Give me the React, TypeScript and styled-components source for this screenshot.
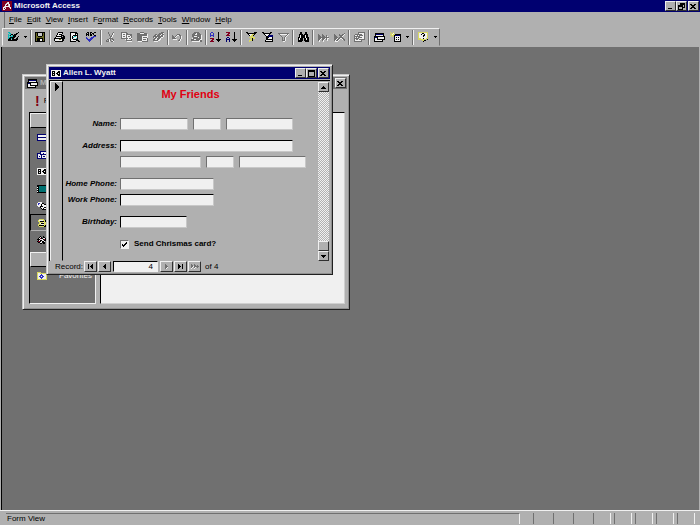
import React from "react";
import styled, { createGlobalStyle } from "styled-components";

const face = "#b0b0b0";
const light = "#f0f0f0";
const shade = "#707070";
const navy = "#000070";
const sans = '"Liberation Sans", Arial, sans-serif';

const GlobalStyle = createGlobalStyle`
  * { box-sizing: border-box; }
  body { margin: 0; background: ${shade}; font: 8px/10px ${sans}; color: #000; }
  button, input { font: inherit; color: inherit; margin: 0; padding: 0; border-radius: 0; }
`;

/* ---------- pixel icons ---------- */

const palette: Record<string, string> = {
  k: "#000000", w: light, g: shade, n: navy, y: "#d8d860", c: "#10b8b8",
  t: "#007070", r: "#800020", l: "#c8c8c8", o: "#686820", b: "#3030c0",
};

const icons: Record<string, string[]> = {
  app: ["rrrrrrrrrr", "rrrrrlwrrr", "rrrrlwwrrr", "rrrlwrlwrr", "rrrwrrlwrr", "rrlwwwwwrr", "rwwlrrrlwr", "rwrwrrrrwr", "rwwrrrrrrr", "rrrrrrrrrr"],
  view: ["cc........k", ".cc.....kk.", "c.ckk.kkk..", "cck.ckkk...", "c.ccckkk..k", "cckkkkk..k.", "ckkckk..kk.", "kkk.kkkkkk.", "kkkkkkkkk..", "..........."],
  save: ["kkkkkkkkkk", "kokllllkok", "kokllllkok", "kokllllkok", "kookkkkook", "kooooooook", "kokkkkkkok", "kokkkwwkok", "kokkkwwkok", "kkkkkkkkkk"],
  print: ["....kkkkk..", "...kwwwwk..", "...kwkkk...", "..kwwwwkkk.", "..kkkkkk.kk", ".kwwwwwkkkk", "kkkkkkkkkkk", "kwwwwoowkk.", "kwwwwwwwkk.", ".kkkkkkkk.."],
  preview: ["kkkkkkk...", "kwwwwkkk..", "kwwwwkwk..", "kwwkkkkk..", "kwkwccwk..", "kwkcwwwk..", "kwkwwwck..", "kwwkkkkk..", "kwwwwwkkk.", "kkkkkk..kk"],
  spell: [".kk.kk..kk", "k.k.k.kk..", "kkk.kk.k..", "k.k.kk..kk", ".......bbb", "b....bbb..", "bb..bbb...", ".bbbbb....", "..bbb.....", "...b......"],
  cut: ["..g....g.", "..g...gw.", "...g..gw.", "...g.gw..", "....ggw..", "....gw...", "...gggg..", ".ggwg.gg.", "g.gwg.wg.", "gggw.ggw."],
  copy: ["gggggg.....", "gwwwwgg....", "gwggwgggggg", "gwwwwgwwwgg", "gwggwgwggwg", "gwwwwgwwwwg", "gggggggwggw", "....wgwwwwg", ".....gggggg", "......wwwww"],
  paste: ["...gggg....", "gggwwwwggg.", "ggggggggggw", "ggggggggggw", "gggggwwwwww", "gggggwggggw", "gggggwwwwwg", "gggggwgggwg", "gggggwwwwwg", ".wwwwgggggg"],
  painter: ["........ggg", "......ggggw", "..gg.gggwgg", ".ggwgggwggw", "ggggggggggw", "gwggwgggww.", ".ggwgggw...", "ggwwggww...", "gggggww....", ".wwww......"],
  undo: ["..........", "..........", ".....ggg..", "g...gwwgg.", "gg.gw...gw", "gggw....gw", "gggg....gw", ".wwww..gw.", "......ggw.", ".......w.."],
  link: ["...ggggg...", "..gggwggg..", ".gggwwgggg.", ".gggggggggw", ".ggwwwggggw", "..gggggwggw", ".wggggggggw", "gggwwggggww", "ggggggggwgg", ".wwwwwwwwgg"],
  sortUp: [".bb.....k.", "b..b....k.", "b..b....k.", "bbbb....k.", "b..b....k.", "........k.", "rrrr....k.", "..rr..kkkkk", ".rr....kkk.", "rrrr....k.."],
  sortDown: ["rrrr....k.", "..rr....k.", ".rr.....k.", "rrrr....k.", "........k.", ".nn.....k.", "n..n....k.", "nnnn..kkkkk", "n..n...kkk.", "n..n....k.."],
  filterSel: ["kk......kkk", ".kkkkkkkkk.", "..kwwwyyk..", "...kwyyk...", "....yyy....", "...yyyyyy..", ".....ykyy..", "....yyk....", "...yyyk....", "...y......."],
  filterForm: ["kk......kk.", ".kkkkkkkk..", "..kwwwwk...", "...kwwknnnn", "....kknnnnn", "....kkkwwwk", "....kkwwwwk", "....kkkkkkk", "...kwwwwwwk", "...kkkkkkkk"],
  filter: ["ggggggggggg", ".gwwwwwwwgw", "..g.....gw.", "...g...gw..", "....g.gw...", "....g.gw...", "....g.gw...", "....gggw...", ".....ww...."],
  find: ["..kk...kk..", "..kk...kk..", ".kkkk.kkkk.", ".kwkkkkwkk.", ".kwkkkkwkk.", "kkwkkkkwkkk", "kwkkk.kkwkk", "kwkkk.kkwkk", "kkkkk.kkkkk", "kkkk...kkkk"],
  newRec: ["...........", "g...g......", "gg..gg..g..", "ggg.ggg.gw.", "ggggggggggg", "gggwgggwgww", "ggw.ggw.gw.", "gw..gw...w.", ".w...w....."],
  delRec: ["..........g", "g....g..ggw", "gg...ggggw.", "ggg...ggw..", "gggg.gggg..", "gggwggwwgg.", "ggwggw..wgg", "gwggw.....g", ".www......."],
  props: ["....ggggggg", "....gwwwwwg", ".gggggggwwg", "gwwgwggggwg", "ggggggwwwwg", "gwgwggggwwg", "gggggwwwwwg", "gwggwgggggg", "gwwwwwwg...", "gggggggg..."],
  database: [".kkkkkkkkk.", ".knnnnnnnk.", ".kwwwwwwwk.", "kkkkkkkkkkk", "knnkwwwwwwk", "kwwkwwwwwwk", "kwwkkkkkkkk", "kwwwwwwwk..", "kkkkkkkkk.."],
  newObject: ["y..y.......", ".yyw.......", "yywyykkkkkk", ".yyyknnnnnk", "y.y.kwwwwwk", "....kwkwkwk", "....kwwwwwk", "....kwkwkwk", "....kwwwwwk", "....kkkkkkk"],
  help: ["yyyyyyyyyy", "ywwwkkwwwy", "ywwkwwkwwy", "ywwwwkkwwy", "ywwwwkwwwy", "ywwwwwwwwy", "yyywwkwwyy", "yyyyyyyy.k", "....yykk..", ".....k...."],
  form: ["wwwwwwwwww", "wkkkwwwkkw", "wkwkwwkkkw", "wkkkwkkwkw", "wkwkwwkkkw", "wkkkwwwkkw", "wwwwwwwwww"],
  table: ["nnnnnnnnnn", "nwwwwwwwwn", "nwwwwwwwwn", "nnnnnnnnnn", "nwwwwwwwwn", "nwwwwwwwwn", "nnnnnnnnnn"],
  query: ["...nnnnnnn", "...nwwwwwn", "nnnnwwnwwn", "nwwnnnnnnn", "nwwwnwwwwn", "nwnwnwnnwn", "nwwwnwwwwn", "nnnnnnnnnn"],
  report: ["kkkkkkkkkk", "kktttttttt", "wktttttttt", "kktttttttt", "wktttttttt", "kktttttttt", "wktttttttt", "kkkkkkkkkk"],
  page: [".wwww.....", "wbbwwkk...", "wbwwkwwkkk", "wwwwkwwwwk", ".wwkkkwwwk", "...kwwwkkk", "....kwkwwk", ".....kkkkk"],
  macro: ["..yyyyy...", ".ywwwwyyk.", ".yykkkkyk.", "..yyyywyyk", "..ywkkkyyk", ".yyywwwyyk", ".ykkkkkyk.", "..yyyyykk."],
  module: ["...k..k...", "..kwk.kk..", ".kwrkkwwk.", "kkkwwwkrkk", ".kwkkwwkk.", "krrkwkkw..", ".kkwwkkk..", "...kk.kk.."],
  favorites: ["yyyy......", "ywwyyyyyyy", "ywwwbwwwwy", "ywwbbbwwwy", "ywbbwbbwwy", "ywwbbbwwwy", "ywwwbwwwwy", "yyyyyyyyyy"],
  min: [".......", ".......", ".......", ".......", ".......", ".kkkk..", "......."],
  max: ["kkkkkkk", "kkkkkkk", "k.....k", "k.....k", "k.....k", "k.....k", "kkkkkkk"],
  restore: ["..kkkkk", "..kkkkk", "kkkkk.k", "kkkkk.k", "k...kkk", "k...k..", "kkkkk.."],
  close: [".......", "kk..kk.", ".kkkk..", "..kk...", ".kkkk..", "kk..kk.", "......."],
  up: ["..k..", ".kkk.", "kkkkk"],
  down: ["kkkkk", ".kkk.", "..k.."],
  drop: ["kkk", ".k."],
  current: ["k....", "kk...", "kkk..", "kkkk.", "kkkk.", "kkk..", "kk...", "k...."],
  first: ["k...k", "k..kk", "k.kkk", "k..kk", "k...k"],
  prev: ["..k", ".kk", "kkk", ".kk", "..k"],
  next: ["g..", "gg.", "ggg", "ggw", "gw."],
  last: ["k...k", "kk..k", "kkk.k", "kk..k", "k...k"],
  add: ["g..g....", "gg.gg.g.", "ggwggggg", "gw.gw.g.", "w..w...."],
};

const Svg = styled.svg`
  display: block;
  flex: none;
  shape-rendering: crispEdges;
`;

function Icon({ name }: { name: string }) {
  const rows = icons[name];
  const width = Math.max(...rows.map((r) => r.length));
  return (
    <Svg width={width} height={rows.length} viewBox={`0 0 ${width} ${rows.length}`} aria-hidden="true">
      {rows.flatMap((row, y) =>
        [...row].map((c, x) =>
          c === "." ? null : <rect key={`${x}-${y}`} x={x} y={y} width="1" height="1" fill={palette[c]} />
        )
      )}
    </Svg>
  );
}

/* ---------- application frame ---------- */

const Frame = styled.div`
  display: flex;
  flex-direction: column;
  min-height: 100vh;
  overflow: hidden;
  background: ${face};
`;

const TitleBar = styled.header<{ $inactive?: boolean }>`
  display: flex;
  align-items: center;
  gap: 2px;
  height: 12px;
  padding: 0 1px 0 2px;
  background: ${(p) => (p.$inactive ? shade : navy)};
  color: ${(p) => (p.$inactive ? face : light)};
  font-weight: bold;
  white-space: nowrap;
`;

const Caption = styled.h1`
  flex: 1;
  margin: 0;
  font: inherit;
`;

const Controls = styled.div`
  display: flex;
  button:last-child { margin-left: 1px; }
`;

const Control = styled.button`
  display: flex;
  align-items: center;
  justify-content: center;
  width: 11px;
  height: 10px;
  background: ${face};
  border: 1px solid;
  border-color: ${light} #303030 #303030 ${light};
`;

function WindowControls({ middle }: { middle: string }) {
  return (
    <Controls>
      <Control aria-label="Minimize"><Icon name="min" /></Control>
      <Control aria-label={middle === "max" ? "Maximize" : "Restore"}><Icon name={middle} /></Control>
      <Control aria-label="Close"><Icon name="close" /></Control>
    </Controls>
  );
}

const MenuBar = styled.nav`
  display: flex;
  align-items: center;
  gap: 5px;
  height: 16px;
  margin-left: 4px;
  padding-left: 4px;
  border-left: 1px solid ${shade};
`;

const MenuItem = styled.button`
  border: 0;
  background: none;
  line-height: 12px;
`;

const Toolbar = styled.div`
  display: flex;
  align-items: center;
  width: max-content;
  height: 18px;
  margin-left: 2px;
  padding-left: 2px;
  border: 1px solid;
  border-color: ${light} ${shade} ${face} ${light};
`;

const ToolButton = styled.button<{ $narrow?: boolean }>`
  display: flex;
  align-items: center;
  justify-content: center;
  width: ${(p) => (p.$narrow ? 8 : 16)}px;
  height: 16px;
  border: 0;
  background: none;
`;

const Separator = styled.span<{ $wide?: boolean }>`
  width: 2px;
  height: 15px;
  margin: 0 ${(p) => (p.$wide ? 1 : 0)}px 0 1px;
  background: linear-gradient(90deg, ${shade} 50%, ${light} 50%);
`;

const Workspace = styled.main`
  position: relative;
  flex: 1;
  margin: 1px 1px 0;
  background: ${shade};
  border-left: 1px solid #000;
`;

const StatusBar = styled.footer`
  display: flex;
  height: 15px;
  padding: 2px 5px 1px 6px;
  border-top: 1px solid ${light};
`;

const StatusText = styled.div`
  flex: 1;
  padding: 0 1px;
  border-top: 1px solid ${shade};
  border-right: 1px solid ${light};
`;

const StatusCells = styled.div`
  display: flex;
  gap: 3px;
  padding-left: 13px;
`;

const StatusCell = styled.span<{ $raised?: boolean }>`
  width: ${(p) => (p.$raised ? 18 : 17)}px;
  border-left: 1px solid ${shade};
  border-right: 1px solid ${(p) => (p.$raised ? light : face)};
`;

/* ---------- child windows ---------- */

const ChildWindow = styled.section<{ $x: number; $y: number; $w: number; $h?: number }>`
  position: absolute;
  left: ${(p) => p.$x}px;
  top: ${(p) => p.$y}px;
  width: ${(p) => p.$w}px;
  min-height: ${(p) => p.$h ?? 0}px;
  display: flex;
  flex-direction: column;
  padding: 2px;
  background: ${face};
  border: 1px solid;
  border-color: #c8c8c8 #202020 #202020 #c8c8c8;
  box-shadow: inset 1px 1px ${light}, inset -1px -1px #909090;
`;

const DatabaseTools = styled.div`
  display: flex;
  align-items: center;
  height: 23px;
  padding: 0 10px;
`;

const Run = styled.button`
  display: flex;
  align-items: center;
  gap: 4px;
  border: 0;
  background: none;
`;

const RunMark = styled.span`
  color: #800010;
  font: bold 14px/16px ${sans};
`;

const Split = styled.div`
  display: flex;
  flex: 1;
  gap: 4px;
  padding: 0 2px 3px 4px;
`;

const Sidebar = styled.aside`
  width: 67px;
  background: ${shade};
  border: 1px solid;
  border-color: #000 ${light} ${light} #000;
`;

const GroupHeader = styled.button`
  display: block;
  width: 100%;
  height: 15px;
  background: ${face};
  border: 1px solid;
  border-color: ${light} #000 #000 ${light};
`;

const ObjectItem = styled.button<{ $active?: boolean }>`
  display: flex;
  align-items: center;
  gap: 12px;
  width: 100%;
  height: 17px;
  padding-left: 6px;
  background: none;
  color: ${light};
  border: 1px solid;
  border-color: ${(p) => (p.$active ? `#000 ${face} ${face} #000` : "transparent")};
`;

const ObjectGroup = styled.div`
  padding: 1px 0 4px;
`;

const ObjectList = styled.div`
  flex: 1;
  background: ${light};
  border: 1px solid;
  border-color: #000 #d0d0d0 #d0d0d0 #000;
`;

const FormBody = styled.div`
  display: flex;
  margin-top: 1px;
  border-top: 1px solid #000;
  border-left: 1px solid #000;
`;

const RecordSelector = styled.div`
  width: 13px;
  padding: 1px 4px;
  border: 1px solid;
  border-color: ${light} #000 ${face} ${light};
`;

const FormContent = styled.form`
  flex: 1;
  display: flex;
  flex-direction: column;
  gap: 10px;
  padding: 6px 0 11px;
`;

const FormTitle = styled.h2`
  margin: 0 0 7px;
  font: bold 11px/14px ${sans};
  color: #e00010;
  text-align: center;
`;

const FieldGroup = styled.div`
  display: flex;
  flex-direction: column;
  gap: 4px;
`;

const FieldRow = styled.div`
  display: grid;
  grid-template-columns: 54px 1fr;
  gap: 3px;
  height: 12px;
`;

const Label = styled.label`
  align-self: center;
  justify-self: end;
  font-style: italic;
  font-weight: bold;
  white-space: nowrap;
`;

const Fields = styled.div`
  display: flex;
  align-items: center;
  gap: 5px;
`;

const Field = styled.input<{ $w: number; $dark?: boolean }>`
  width: ${(p) => p.$w}px;
  height: 12px;
  background: ${light};
  border: 1px solid;
  border-color: ${(p) => (p.$dark ? "#000" : shade)} #c8c8c8 #c8c8c8 ${(p) => (p.$dark ? "#000" : shade)};
  outline: 0;
`;

const CheckBox = styled.input`
  appearance: none;
  width: 9px;
  height: 9px;
  background: ${light};
  border: 1px solid;
  border-color: ${shade} ${light} ${light} ${shade};
  &:checked {
    background: ${light} url("data:image/svg+xml,%3Csvg xmlns='http://www.w3.org/2000/svg' viewBox='0 0 7 7'%3E%3Cpath d='M1 3v2h1v1h1V5h1V4h1V3h1V1H5v1H4v1H3v1H2V3z'/%3E%3C/svg%3E");
  }
`;

const CheckLabel = styled.label`
  font-weight: bold;
`;

const ScrollBar = styled.div`
  display: flex;
  flex-direction: column;
  width: 11px;
  margin: 1px 1px 0 0;
  background: conic-gradient(${face} 25%, ${light} 0 50%, ${face} 0 75%, ${light} 0) 0 0 / 2px 2px;
`;

const ScrollTrack = styled.div`
  flex: 1;
`;

const RecordBar = styled.div`
  display: flex;
  align-items: center;
  gap: 1px;
  height: 11px;
  padding-left: 6px;
  overflow: hidden;
`;

const RecordText = styled.label`
  width: 28px;
`;

const RecordNumber = styled.input`
  width: 45px;
  height: 11px;
  margin: 0 1px;
  padding-right: 4px;
  text-align: right;
  background: ${light};
  border: 1px solid;
  border-color: #000 ${light} ${light} #000;
`;

const NavButton = styled(Control)`
  width: 13px;
  height: 11px;
`;

const Total = styled.span`
  padding-left: 3px;
`;

/* ---------- data ---------- */

const menus = ["&File", "&Edit", "&View", "&Insert", "F&ormat", "&Records", "&Tools", "&Window", "&Help"];

const tools = (
  "view drop | save | print preview spell | cut copy paste painter | undo | link | sortUp sortDown || " +
  "filterSel filterForm filter || find || newRec delRec || props || database newObject drop || help drop"
).split(" ");

const objects = ["table", "query", "form", "report", "page", "macro", "module"];

type Row = { label: string; fields: { name: string; w: number; dark?: boolean }[] };

const groups: Row[][] = [
  [{ label: "Name:", fields: [{ name: "First name", w: 68 }, { name: "Middle name", w: 28 }, { name: "Last name", w: 67 }] }],
  [
    { label: "Address:", fields: [{ name: "Street", w: 173, dark: true }] },
    { label: "", fields: [{ name: "City", w: 81 }, { name: "State", w: 28 }, { name: "Postal code", w: 67 }] },
  ],
  [
    { label: "Home Phone:", fields: [{ name: "Home Phone", w: 94 }] },
    { label: "Work Phone:", fields: [{ name: "Work Phone", w: 94, dark: true }] },
  ],
  [{ label: "Birthday:", fields: [{ name: "Birthday", w: 67, dark: true }] }],
];

function Menu({ text }: { text: string }) {
  const at = text.indexOf("&");
  return (
    <MenuItem>
      {text.slice(0, at)}<u>{text[at + 1]}</u>{text.slice(at + 2)}
    </MenuItem>
  );
}

function DatabaseWindow() {
  return (
    <ChildWindow $x={20} $y={27} $w={328} $h={236} aria-label="Database">
      <TitleBar $inactive>
        <Icon name="database" />
        <Caption>M</Caption>
        <Control aria-label="Close"><Icon name="close" /></Control>
      </TitleBar>
      <DatabaseTools><Run><RunMark>!</RunMark>Run</Run></DatabaseTools>
      <Split>
        <Sidebar>
          <GroupHeader aria-label="Objects" />
          <ObjectGroup>
            {objects.map((name) => (
              <ObjectItem key={name} aria-label={name} $active={name === "macro"}><Icon name={name} /></ObjectItem>
            ))}
          </ObjectGroup>
          <GroupHeader aria-label="Groups" />
          <ObjectItem><Icon name="favorites" />Favorites</ObjectItem>
        </Sidebar>
        <ObjectList />
      </Split>
    </ChildWindow>
  );
}

function FriendWindow() {
  return (
    <ChildWindow $x={44} $y={17} $w={287} aria-label="Allen L. Wyatt">
      <TitleBar>
        <Icon name="form" />
        <Caption>Allen L. Wyatt</Caption>
        <WindowControls middle="max" />
      </TitleBar>
      <FormBody>
        <RecordSelector><Icon name="current" /></RecordSelector>
        <FormContent>
          <FormTitle>My Friends</FormTitle>
          {groups.map((rows, g) => (
            <FieldGroup key={g}>
              {rows.map((row) => (
                <FieldRow key={row.fields[0].name}>
                  <Label htmlFor={row.fields[0].name}>{row.label}</Label>
                  <Fields>
                    {row.fields.map((f) => (
                      <Field key={f.name} id={f.name} aria-label={f.name} $w={f.w} $dark={f.dark} />
                    ))}
                  </Fields>
                </FieldRow>
              ))}
            </FieldGroup>
          ))}
          <FieldRow>
            <span />
            <Fields>
              <CheckBox type="checkbox" id="card" defaultChecked />
              <CheckLabel htmlFor="card">Send Chrismas card?</CheckLabel>
            </Fields>
          </FieldRow>
        </FormContent>
        <ScrollBar>
          <Control aria-label="Scroll up"><Icon name="up" /></Control>
          <ScrollTrack />
          <Control aria-label="Scroll position" />
          <Control aria-label="Scroll down"><Icon name="down" /></Control>
        </ScrollBar>
      </FormBody>
      <RecordBar>
        <RecordText htmlFor="record">Record:</RecordText>
        <NavButton aria-label="First record"><Icon name="first" /></NavButton>
        <NavButton aria-label="Previous record"><Icon name="prev" /></NavButton>
        <RecordNumber id="record" defaultValue="4" />
        <NavButton aria-label="Next record"><Icon name="next" /></NavButton>
        <NavButton aria-label="Last record"><Icon name="last" /></NavButton>
        <NavButton aria-label="New record"><Icon name="add" /></NavButton>
        <Total>of 4</Total>
      </RecordBar>
    </ChildWindow>
  );
}

export default function App() {
  return (
    <Frame>
      <GlobalStyle />
      <TitleBar>
        <Icon name="app" />
        <Caption>Microsoft Access</Caption>
        <WindowControls middle="restore" />
      </TitleBar>
      <MenuBar>{menus.map((m) => <Menu key={m} text={m} />)}</MenuBar>
      <Toolbar role="toolbar">
        {tools.map((t, i) =>
          t.startsWith("|") ? (
            <Separator key={i} $wide={t === "||"} />
          ) : (
            <ToolButton key={i} aria-label={t} $narrow={t === "drop"}><Icon name={t} /></ToolButton>
          )
        )}
      </Toolbar>
      <Workspace>
        <DatabaseWindow />
        <FriendWindow />
      </Workspace>
      <StatusBar>
        <StatusText>Form View</StatusText>
        <StatusCells>
          {[0, 1, 2, 3, 4, 5, 6, 7].map((n) => <StatusCell key={n} $raised={n > 2} />)}
        </StatusCells>
      </StatusBar>
    </Frame>
  );
}
